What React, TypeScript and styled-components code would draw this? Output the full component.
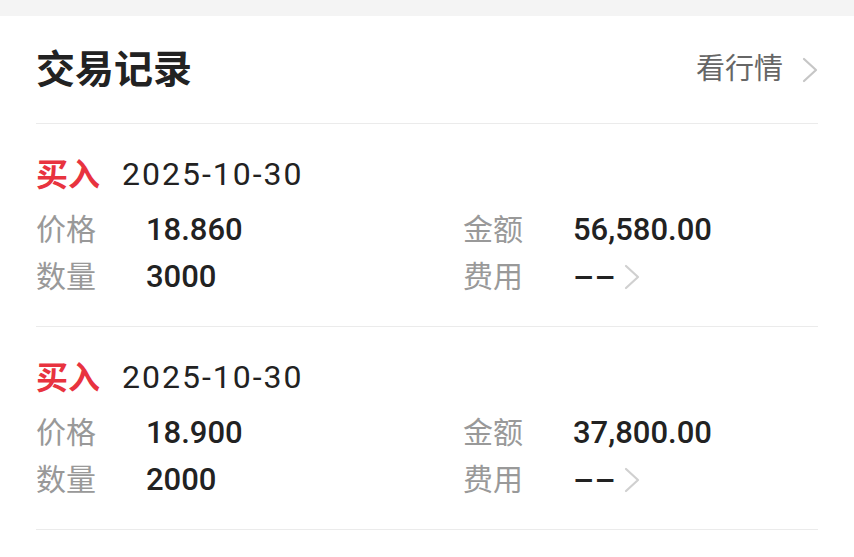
import React from "react";
import styled, { createGlobalStyle } from "styled-components";

const Global = createGlobalStyle`
  html, body { margin: 0; padding: 0; background: #ffffff; }
  body { font-family: Roboto, "Noto Sans CJK SC", sans-serif; -webkit-font-smoothing: antialiased; }
`;

const Page = styled.div`
  width: 854px;
  min-height: 557px;
  background: #ffffff;
`;

const TopBand = styled.div`
  height: 16px;
  background: #f4f4f4;
`;

const Card = styled.section`
  padding: 0 36px;
  background: #ffffff;
`;

const Header = styled.header`
  height: 107px;
  display: flex;
  align-items: center;
  justify-content: space-between;
  border-bottom: 1px solid #ebebeb;
`;

const Title = styled.h1`
  margin: 0;
  padding-bottom: 6px;
  line-height: 1;
  font-family: "Noto Sans CJK SC", sans-serif;
  font-size: 39px;
  font-weight: 700;
  color: #222222;
`;

const MoreLink = styled.a`
  display: flex;
  align-items: center;
  gap: 19px;
  font-family: "Noto Sans CJK SC", sans-serif;
  font-size: 29px;
  line-height: 1;
  color: #666666;
  text-decoration: none;
`;

const MoreText = styled.span`
  padding-bottom: 6px;
`;

const Chevron = styled.svg<{ $color: string }>`
  display: block;
  flex: none;
  stroke: ${(p) => p.$color};
  fill: none;
`;

const Record = styled.article`
  padding: 28px 0 26px;
  border-bottom: 1px solid #ebebeb;
`;

const RecordHead = styled.div`
  height: 44px;
  display: flex;
  align-items: center;
  gap: 22px;
  margin-bottom: 10px;
`;

const Side = styled.span<{ $color: string }>`
  padding-bottom: 5px;
  line-height: 1;
  font-family: "Noto Sans CJK SC", sans-serif;
  font-size: 32px;
  font-weight: 700;
  color: ${(p) => p.$color};
`;

const DateText = styled.span`
  font-family: Roboto, sans-serif;
  font-size: 32px;
  font-weight: 400;
  color: #222222;
  letter-spacing: 2px;
`;

const Grid = styled.div`
  display: grid;
  grid-template-columns: 110px 317px 110px 1fr;
  grid-auto-rows: 47px;
  align-items: center;
`;

const Label = styled.span`
  padding-bottom: 6px;
  line-height: 1;
  font-family: "Noto Sans CJK SC", sans-serif;
  font-size: 30px;
  color: #999999;
`;

const Value = styled.span`
  display: flex;
  align-items: center;
  gap: 10px;
  font-family: Roboto, sans-serif;
  font-size: 31px;
  font-weight: 500;
  color: #222222;
`;

const Dashes = styled.span`
  display: inline-block;
  letter-spacing: 0px;
  font-weight: 500;
  transform: scaleX(2.05);
  transform-origin: left center;
  margin-right: 20px;
`;

type Trade = {
  side: string;
  date: string;
  price: string;
  qty: string;
  amount: string;
  fee: string;
};

const trades: Trade[] = [
  { side: "买入", date: "2025-10-30", price: "18.860", qty: "3000", amount: "56,580.00", fee: "--" },
  { side: "买入", date: "2025-10-30", price: "18.900", qty: "2000", amount: "37,800.00", fee: "--" },
];

const ChevronIcon = ({ color }: { color: string }) => (
  <Chevron $color={color} width="16" height="26" viewBox="0 0 16 26" strokeWidth="2.2" strokeLinecap="round" strokeLinejoin="round">
    <polyline points="2,2 14,13 2,24" />
  </Chevron>
);

export default function App() {
  return (
    <Page>
      <Global />
      <TopBand />
      <Card>
        <Header>
          <Title>交易记录</Title>
          <MoreLink href="#">
            <MoreText>看行情</MoreText>
            <ChevronIcon color="#c6c6c6" />
          </MoreLink>
        </Header>
        {trades.map((t, i) => (
          <Record key={i}>
            <RecordHead>
              <Side $color="#e8333f">{t.side}</Side>
              <DateText>{t.date}</DateText>
            </RecordHead>
            <Grid>
              <Label>价格</Label>
              <Value>{t.price}</Value>
              <Label>金额</Label>
              <Value>{t.amount}</Value>
              <Label>数量</Label>
              <Value>{t.qty}</Value>
              <Label>费用</Label>
              <Value>
                <Dashes>{t.fee}</Dashes>
                <ChevronIcon color="#d0d0d0" />
              </Value>
            </Grid>
          </Record>
        ))}
      </Card>
    </Page>
  );
}
